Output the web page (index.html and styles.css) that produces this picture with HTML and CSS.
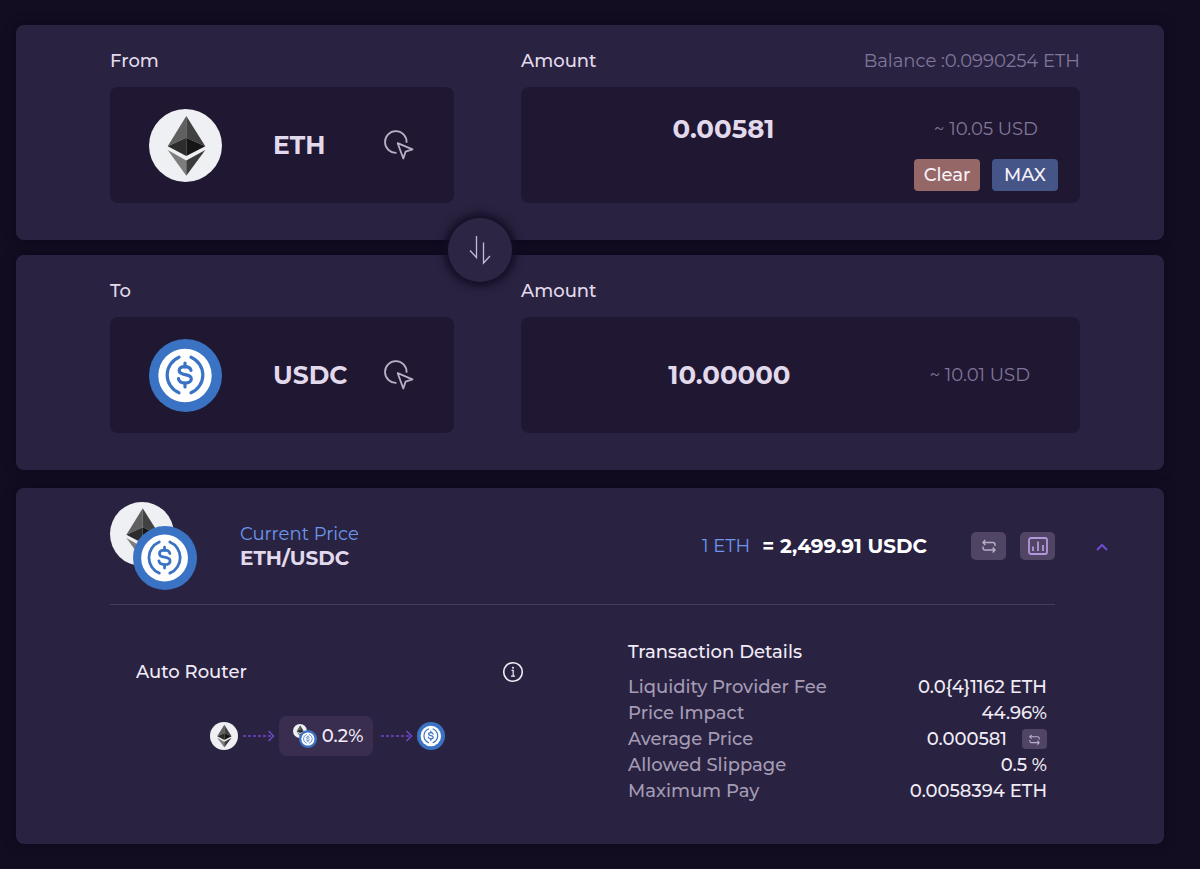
FILE: index.html
```html
<!DOCTYPE html>
<html lang="en">

<head>
    <meta charset="UTF-8">
    <meta name="viewport" content="width=device-width, initial-scale=1.0">
    <title>Swap ETH to USDC</title>
    <link rel="stylesheet" href="styles.css">
</head>

<body>
    <!-- Shared icons -->
    <svg class="icon-defs" aria-hidden="true">
        <symbol id="eth" viewBox="0 0 73 73">
            <circle cx="36.5" cy="36.5" r="36.5" fill="#eff0f3" />
            <path d="M37.3 7L18.7 37.3l18.6-8.6z" fill="#606060" />
            <path d="M37.3 7l19 30.3-19-8.6z" fill="#414141" />
            <path d="M18.7 37.3l18.6-8.6V47z" fill="#2c2c2c" />
            <path d="M56.3 37.3l-19-8.6V47z" fill="#161616" />
            <path d="M18.7 41l18.6 10.6v15.2z" fill="#7d7d7d" />
            <path d="M56.3 41l-19 10.6v15.2z" fill="#3b3b3b" />
        </symbol>
        <symbol id="usdc" viewBox="0 0 73 73">
            <circle cx="36.5" cy="36.5" r="36.5" fill="#3b73c4" />
            <circle cx="36" cy="36.5" r="26.7" fill="#fff" />
            <g fill="none" stroke="#3b73c4" stroke-width="3.2" stroke-linecap="round">
                <path d="M30 18.2a19.3 19.3 0 0 0 0 35.600M42 18.2a19.3 19.3 0 0 1 0 35.600" />
                <path d="M36 24v4M36 44v4" />
                <path d="M42 31.400c-.6-2.6-2.800-3.8-6-3.8-3.500 0-5.800 1.5-5.800 4 0 2.8 2.700 3.500 5.800 4 3.300.5 6.300 1.3 6.300 4.200 0 2.700-2.600 4.200-6.300 4.200-3.700 0-6-1.500-6.500-4.300" />
            </g>
        </symbol>
        <symbol id="select" viewBox="0 0 30 30">
            <g fill="none" stroke="currentColor" stroke-width="1.8" stroke-linejoin="round">
                <path d="M22.6 12.7a10.8 10.8 0 1 0-10.1 10.1" />
                <path d="M13.7 13.2l14.8 6.2-6.9 2.2-2.3 6.9z" />
            </g>
        </symbol>
        <symbol id="flip" viewBox="0 0 14 14">
            <path d="M1 3.5h10a2 2 0 0 1 2 2V7M3.3 1L1 3.5 3.3 6M13 11H3a2 2 0 0 1-2-2V7.5M10.7 8.5L13 11l-2.3 2.5"
                fill="none" stroke="currentColor" stroke-width="1.4" />
        </symbol>
        <symbol id="arrow" viewBox="0 0 33 12">
            <path d="M1 6h28" fill="none" stroke="#6d48c8" stroke-width="1.4" stroke-dasharray="3 2" />
            <path d="M26.5 1l5 5-5 5" fill="none" stroke="#6d48c8" stroke-width="1.5" />
        </symbol>
    </svg>

    <main class="swap">
        <section class="card pair">
            <div class="field">
                <span class="label" id="fromLabel">From</span>
                <button class="token" type="button" aria-describedby="fromLabel">
                    <svg class="token-logo"><use href="#eth" /></svg>
                    <span class="token-name">ETH</span>
                    <svg class="token-select"><use href="#select" /></svg>
                </button>
            </div>
            <div class="field">
                <div class="field-head">
                    <label class="label" for="amountFrom">Amount</label>
                    <span class="balance">Balance :0.0990254 ETH</span>
                </div>
                <div class="amount with-actions">
                    <div class="amount-row">
                        <input type="text" id="amountFrom" value="0.00581">
                        <span class="usd">~ 10.05 USD</span>
                    </div>
                    <div class="actions">
                        <button class="btn clear" type="button">Clear</button>
                        <button class="btn max" type="button">MAX</button>
                    </div>
                </div>
            </div>
            <button class="switch" type="button" aria-label="Switch tokens">
                <svg width="22" height="30" viewBox="0 0 22 30">
                    <path d="M7.5 1v21.5L1 15.5M14.5 7.5V28l6.5-7" fill="none" stroke="#c6bcd2" stroke-width="1.3" />
                </svg>
            </button>
        </section>

        <section class="card pair">
            <div class="field">
                <span class="label" id="toLabel">To</span>
                <button class="token" type="button" aria-describedby="toLabel">
                    <svg class="token-logo"><use href="#usdc" /></svg>
                    <span class="token-name">USDC</span>
                    <svg class="token-select"><use href="#select" /></svg>
                </button>
            </div>
            <div class="field">
                <div class="field-head">
                    <label class="label" for="amountTo">Amount</label>
                </div>
                <div class="amount">
                    <div class="amount-row">
                        <input type="text" id="amountTo" value="10.00000">
                        <span class="usd">~ 10.01 USD</span>
                    </div>
                </div>
            </div>
        </section>

        <section class="card price">
            <div class="price-head">
                <div class="price-main">
                    <div class="pair-logo">
                        <svg><use href="#eth" /></svg>
                        <svg><use href="#usdc" /></svg>
                    </div>
                    <div class="price-pair">
                        <div class="price-title">Current Price</div>
                        <div class="price-name">ETH/USDC</div>
                    </div>
                    <div class="rate">
                        <span class="rate-base">1 ETH</span>
                        <span class="rate-quote">= 2,499.91 USDC</span>
                    </div>
                    <div class="tools">
                        <button class="tool" type="button" aria-label="Invert price">
                            <svg width="14" height="14"><use href="#flip" /></svg>
                        </button>
                        <button class="tool chart" type="button" aria-label="Show chart">
                            <svg width="20" height="18" viewBox="0 0 20 18">
                                <g fill="none" stroke="currentColor" stroke-width="1.8">
                                    <rect x="1" y="1" width="18" height="16" rx="2" />
                                    <path d="M5 9.5v4.5M10 4.5V14M15 8v6" />
                                </g>
                            </svg>
                        </button>
                    </div>
                </div>
                <button class="collapse" type="button" aria-label="Collapse details">
                    <svg width="12" height="8" viewBox="0 0 12 8">
                        <path d="M1 7l5-5 5 5" fill="none" stroke="#6f4cd0" stroke-width="2" />
                    </svg>
                </button>
            </div>

            <div class="price-body">
                <div class="router">
                    <div class="router-head">
                        <span>Auto Router</span>
                        <svg width="22" height="22" viewBox="0 0 22 22">
                            <circle cx="11" cy="11" r="9.3" fill="none" stroke="#f1ecf7" stroke-width="1.6" />
                            <path d="M9.5 9.3h1.7V15M9 15.2h4" fill="none" stroke="#f1ecf7" stroke-width="1.2" />
                            <circle cx="11" cy="6.7" r="1" fill="#f1ecf7" />
                        </svg>
                    </div>
                    <div class="route">
                        <svg class="route-logo"><use href="#eth" /></svg>
                        <svg class="route-arrow"><use href="#arrow" /></svg>
                        <div class="pool">
                            <div class="pair-logo small">
                                <svg><use href="#eth" /></svg>
                                <svg><use href="#usdc" /></svg>
                            </div>
                            <span>0.2%</span>
                        </div>
                        <svg class="route-arrow"><use href="#arrow" /></svg>
                        <svg class="route-logo"><use href="#usdc" /></svg>
                    </div>
                </div>

                <div class="details">
                    <div class="details-title" id="detailsTitle">Transaction Details</div>
                    <table aria-labelledby="detailsTitle">
                        <tr>
                            <th scope="row">Liquidity Provider Fee</th>
                            <td>0.0{4}1162 ETH</td>
                        </tr>
                        <tr>
                            <th scope="row">Price Impact</th>
                            <td>44.96%</td>
                        </tr>
                        <tr>
                            <th scope="row">Average Price</th>
                            <td>
                                <div class="with-flip">
                                    <span>0.000581</span>
                                    <button class="tool mini" type="button" aria-label="Invert average price">
                                        <svg width="11" height="11"><use href="#flip" /></svg>
                                    </button>
                                </div>
                            </td>
                        </tr>
                        <tr>
                            <th scope="row">Allowed Slippage</th>
                            <td>0.5 %</td>
                        </tr>
                        <tr>
                            <th scope="row">Maximum Pay</th>
                            <td>0.0058394 ETH</td>
                        </tr>
                    </table>
                </div>
            </div>
        </section>
    </main>
</body>

</html>
```
FILE: styles.css
```css
* {
    box-sizing: border-box;
}

body {
    margin: 0;
    font-family: 'Montserrat', 'Inter', sans-serif;
    font-size: 18px;
    line-height: 24px;
    color: #f1ecf7;
    background: #130d22;
}

button,
input {
    font: inherit;
    color: inherit;
    border: none;
    padding: 0;
    background: none;
}

button {
    cursor: pointer;
}

svg {
    display: block;
    flex-shrink: 0;
}

.icon-defs {
    position: absolute;
    width: 0;
    height: 0;
}

.swap {
    padding: 25px 36px 25px 16px;
}

.card {
    position: relative;
    border-radius: 8px;
    background: #292341;
    box-shadow: 0 0 12px rgba(10, 4, 24, 0.5);
}

/* From / To cards */
.pair {
    display: grid;
    grid-template-columns: 344fr 559fr;
    column-gap: 67px;
    padding: 24px 84px 37px 94px;
    margin-bottom: 15px;
}

.field {
    display: flex;
    flex-direction: column;
    gap: 14px;
    min-width: 0;
}

.field-head {
    display: flex;
    justify-content: space-between;
}

.label {
    font-weight: 500;
    color: #e2daec;
}

.balance,
.usd {
    color: #81769a;
}

.token,
.amount {
    min-height: 116px;
    border-radius: 8px;
    background: #201732;
}

.token {
    display: flex;
    align-items: center;
    padding: 0 40px 0 39px;
    text-align: left;
}

.token-logo {
    width: 73px;
    height: 73px;
}

.token-name {
    flex: 1;
    margin-left: 51px;
    font-size: 25px;
    font-weight: 700;
    color: #e2daec;
}

.token-select {
    width: 30px;
    height: 30px;
    color: #b9afc6;
}

.amount {
    display: flex;
    flex-direction: column;
    justify-content: center;
    padding: 0 50px 0 8px;
}

.amount-row {
    display: flex;
    align-items: center;
}

.amount-row input {
    flex: 1;
    min-width: 0;
    height: 36px;
    font-size: 26px;
    font-weight: 700;
    text-align: center;
    color: #e2daec;
    outline: none;
}

.with-actions {
    justify-content: space-between;
    padding: 24px 22px 12px 0;
}

.with-actions .usd {
    margin: 0 20px 0 8px;
}

.actions {
    display: flex;
    justify-content: flex-end;
    gap: 12px;
}

.btn {
    width: 66px;
    height: 32px;
    border-radius: 4px;
    font-weight: 500;
    color: #f6f2fa;
}

.clear {
    background: #966767;
}

.max {
    background: #465588;
}

.switch {
    position: absolute;
    left: calc(50% - 142px);
    bottom: -42px;
    z-index: 1;
    display: flex;
    align-items: center;
    justify-content: center;
    width: 64px;
    height: 64px;
    border-radius: 50%;
    background: #2c2543;
    box-shadow: 0 0 8px 4px #130b22;
}

/* Price card */
.price {
    margin-top: 18px;
    padding: 14px 56px 40px 94px;
}

.price-head {
    display: flex;
    align-items: center;
    gap: 41px;
}

.price-main {
    flex: 1;
    display: flex;
    align-items: center;
    padding-bottom: 14px;
    border-bottom: 1px solid #453e5a;
}

.pair-logo {
    display: grid;
    grid-template-columns: 23px 41px 23px;
    grid-template-rows: 24px 40px 24px;
}

.pair-logo svg {
    grid-area: 1 / 1 / 3 / 3;
    width: 64px;
    height: 64px;
}

.pair-logo svg + svg {
    grid-area: 2 / 2 / 4 / 4;
}

.price-pair {
    margin-left: 43px;
}

.price-title {
    color: #6c97ec;
}

.price-name {
    font-size: 20px;
    font-weight: 700;
    color: #e2daec;
}

.rate {
    display: flex;
    gap: 12px;
    margin-left: auto;
}

.rate-base {
    color: #6c97ec;
}

.rate-quote {
    font-size: 20px;
    font-weight: 700;
    color: #fff;
}

.tools {
    display: flex;
    gap: 14px;
    margin-left: 44px;
}

.tool {
    display: flex;
    align-items: center;
    justify-content: center;
    width: 35px;
    height: 28px;
    border-radius: 5px;
    color: #b9afc6;
    background: #504564;
}

.chart {
    color: #b497dd;
}

.mini {
    width: 25px;
    height: 20px;
    border-radius: 4px;
}

.collapse {
    padding-bottom: 14px;
}

.price-body {
    display: grid;
    grid-template-columns: 388fr 419fr;
    column-gap: 104px;
    padding: 35px 61px 0 26px;
    font-weight: 500;
}

.router-head {
    display: flex;
    align-items: center;
    justify-content: space-between;
    margin-top: 20px;
}

.route {
    display: flex;
    align-items: center;
    justify-content: center;
    margin-top: 32px;
    padding-right: 6px;
}

.route-logo {
    width: 28px;
    height: 28px;
}

.route-arrow {
    width: 33px;
    height: 12px;
    margin: 0 4px;
}

.pool {
    display: flex;
    align-items: center;
    justify-content: space-between;
    width: 94px;
    height: 40px;
    margin-right: 3px;
    padding: 0 9px 0 14px;
    border-radius: 8px;
    background: #3a2e50;
}

.small {
    grid-template-columns: 6px 8px 10px;
    grid-template-rows: 6px 8px 10px;
}

.small svg {
    width: 14px;
    height: 14px;
}

.small svg + svg {
    width: 18px;
    height: 18px;
}

.details table {
    width: 100%;
    margin-top: 10px;
    border-collapse: collapse;
    line-height: 26px;
}

.details th,
.details td {
    padding: 0;
    font-weight: 500;
    text-align: left;
    white-space: nowrap;
}

.details th {
    color: #a59bb5;
}

.details td {
    text-align: right;
}

.with-flip {
    display: flex;
    align-items: center;
    justify-content: flex-end;
    gap: 15px;
}
```
